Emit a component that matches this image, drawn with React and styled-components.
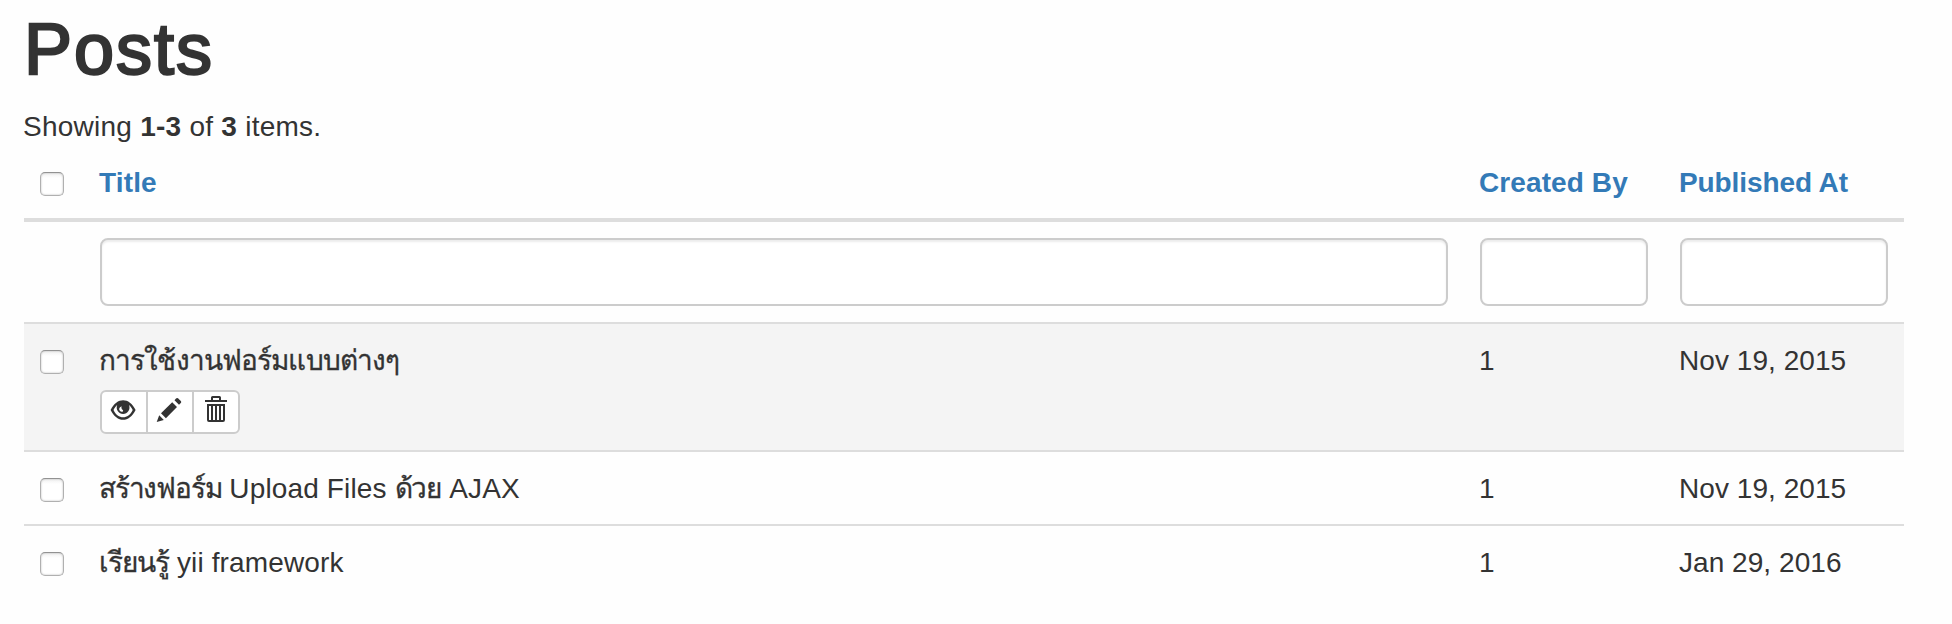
import React from 'react';
import styled, { createGlobalStyle } from 'styled-components';

const GlobalStyle = createGlobalStyle`
  * { box-sizing: border-box; }
  body {
    margin: 0;
    background: #fefefe;
    color: #333;
    font: 28px/40px "Liberation Sans", "Noto Sans", sans-serif;
  }
`;

const Page = styled.main`
  padding: 0 48px 0 24px;
`;

const Heading = styled.h1`
  margin: 0;
  padding: 9px 0 17px;
  font-size: 72px;
  font-weight: 400;
  line-height: 80px;
  letter-spacing: 2px;
  -webkit-text-stroke: 2.4px #333;
`;

const Line = styled.div`
  height: 40px;
  margin-left: -1px;
  line-height: 42px;
  letter-spacing: ${(p) => p.$track || 0}px;
`;

const Thai = styled.span`
  letter-spacing: ${(p) => p.$track}px;
  -webkit-text-stroke: 0.3px #333;
`;

const Grid = styled.table`
  width: 100%;
  table-layout: fixed;
  border-collapse: separate;
  border-spacing: 0;
`;

const Col = styled.col`
  width: ${(p) => p.$w};
`;

const HeadCell = styled.th`
  height: 76px;
  padding: 16px;
  border-bottom: 4px solid #ddd;
  color: #337ab7;
  text-align: left;
  vertical-align: top;
  white-space: nowrap;
`;

const FilterCell = styled.td`
  height: 100px;
  padding: 16px;
`;

const Cell = styled.td`
  padding: 16px;
  border-top: 2px solid #ddd;
  background: ${(p) => (p.$active ? '#f4f4f4' : 'transparent')};
  vertical-align: top;
  white-space: nowrap;
`;

const FilterInput = styled.input`
  display: block;
  width: 100%;
  height: 68px;
  padding: 12px 24px;
  border: 2px solid #ccc;
  border-radius: 8px;
  background: #fff;
  box-shadow: inset 0 2px 2px rgba(0, 0, 0, 0.075);
  font: inherit;
  outline: none;
`;

const Check = styled.input.attrs({ type: 'checkbox' })`
  appearance: none;
  display: block;
  width: 24px;
  height: 24px;
  margin: 10px 0 0;
  border: 1px solid #b0b0b0;
  border-top-color: #929292;
  border-radius: 5px;
  background: linear-gradient(#f0f0f0, #fff 5px);
  box-shadow: inset 0 0 2px rgba(0, 0, 0, 0.3);
`;

const ButtonGroup = styled.div`
  display: flex;
  margin-top: 10px;
`;

const IconButton = styled.button`
  display: flex;
  align-items: flex-start;
  justify-content: center;
  width: 48px;
  height: 44px;
  padding: 2px 0 0;
  border: 2px solid #ccc;
  background: #fff;
  color: #333;
  & + & { margin-left: -2px; }
  &:first-child { border-radius: 6px 0 0 6px; }
  &:last-child { border-radius: 0 6px 6px 0; }
`;

const Icon = styled.svg`
  display: block;
  width: 28px;
  height: 28px;
  flex: none;
  fill: currentColor;
`;

const EyeIcon = () => (
  <Icon viewBox="0 0 28 28">
    <path
      fillRule="evenodd"
      d="M.6 16C3.800 9.400 8.400 6.200 13.100 6.200S22.400 9.400 25.600 16C22.400 22.600 17.800 25.800 13.100 25.800S3.800 22.600.6 16zM3.500 16C5.800 20.800 9.200 23.300 13.100 23.300S20.400 20.800 22.700 16C21.700 14 20.500 12.300 19 11.100A6.400 6.400 0 1 1 7.200 11.100C5.700 12.300 4.500 14 3.500 16z"
    />
    <path fill="#fff" d="M11.600 12.200C9.800 13 9 14.200 9.200 15.600S10.700 18 12.300 17.700C13.200 17.400 13.400 16.600 12.800 16C11.400 15 11.200 13.800 11.600 12.200z" />
  </Icon>
);

const PencilIcon = () => (
  <Icon viewBox="0 0 28 28">
    <path d="M18.500 6.200l1.500-1.700q1-1.100 2-.2l2.800 2.700q1 1 0 2l-1.800 1.700zM16.200 8.300l4.800 4.800L9.900 24.200 5 19.300zM3.200 21.300l4.600 4.600L.7 28z" />
  </Icon>
);

const TrashIcon = () => (
  <Icon viewBox="0 0 28 28">
    <path
      fillRule="evenodd"
      d="M10.500 2h7q1.500 0 1.500 1.500V6h6v2H3V6h6V3.500Q9 2 10.500 2zM11 4v2h6V4zM5 10h18v16q0 2-2 2H7q-2 0-2-2zm2 2v14h2V12zm4 0v14h2V12zm4 0v14h2V12zm4 0v14h2V12z"
    />
  </Icon>
);

const posts = [
  {
    id: 1,
    title: <Thai $track={-0.88}>การใช้งานฟอร์มแบบต่างๆ</Thai>,
    by: '1',
    at: 'Nov 19, 2015',
    active: true,
  },
  {
    id: 2,
    title: (
      <>
        <Thai $track={-1.2}>สร้างฟอร์ม</Thai> Upload Files <Thai $track={-1.1}>ด้วย</Thai> AJAX
      </>
    ),
    by: '1',
    at: 'Nov 19, 2015',
  },
  {
    id: 3,
    title: (
      <>
        <Thai $track={-1}>เรียนรู้</Thai> yii framework
      </>
    ),
    by: '1',
    at: 'Jan 29, 2016',
  },
];

export default function App() {
  return (
    <Page>
      <GlobalStyle />
      <Heading>Posts</Heading>
      <Line $track={0.25}>Showing <b>1-3</b> of <b>3</b> items.</Line>
      <Grid>
        <colgroup>
          <Col $w="60px" />
          <Col $w="auto" />
          <Col $w="200px" />
          <Col $w="240px" />
        </colgroup>
        <thead>
          <tr>
            <HeadCell><Check /></HeadCell>
            <HeadCell><Line $track={0.15}>Title</Line></HeadCell>
            <HeadCell><Line $track={0.1}>Created By</Line></HeadCell>
            <HeadCell><Line $track={-0.1}>Published At</Line></HeadCell>
          </tr>
          <tr>
            <FilterCell />
            <FilterCell><FilterInput /></FilterCell>
            <FilterCell><FilterInput /></FilterCell>
            <FilterCell><FilterInput /></FilterCell>
          </tr>
        </thead>
        <tbody>
          {posts.map((post) => (
            <tr key={post.id}>
              <Cell $active={post.active}><Check /></Cell>
              <Cell $active={post.active}>
                <Line $track={0.14}>{post.title}</Line>
                {post.active && (
                  <ButtonGroup>
                    <IconButton><EyeIcon /></IconButton>
                    <IconButton><PencilIcon /></IconButton>
                    <IconButton><TrashIcon /></IconButton>
                  </ButtonGroup>
                )}
              </Cell>
              <Cell $active={post.active}><Line>{post.by}</Line></Cell>
              <Cell $active={post.active}><Line $track={0.05}>{post.at}</Line></Cell>
            </tr>
          ))}
        </tbody>
      </Grid>
    </Page>
  );
}
